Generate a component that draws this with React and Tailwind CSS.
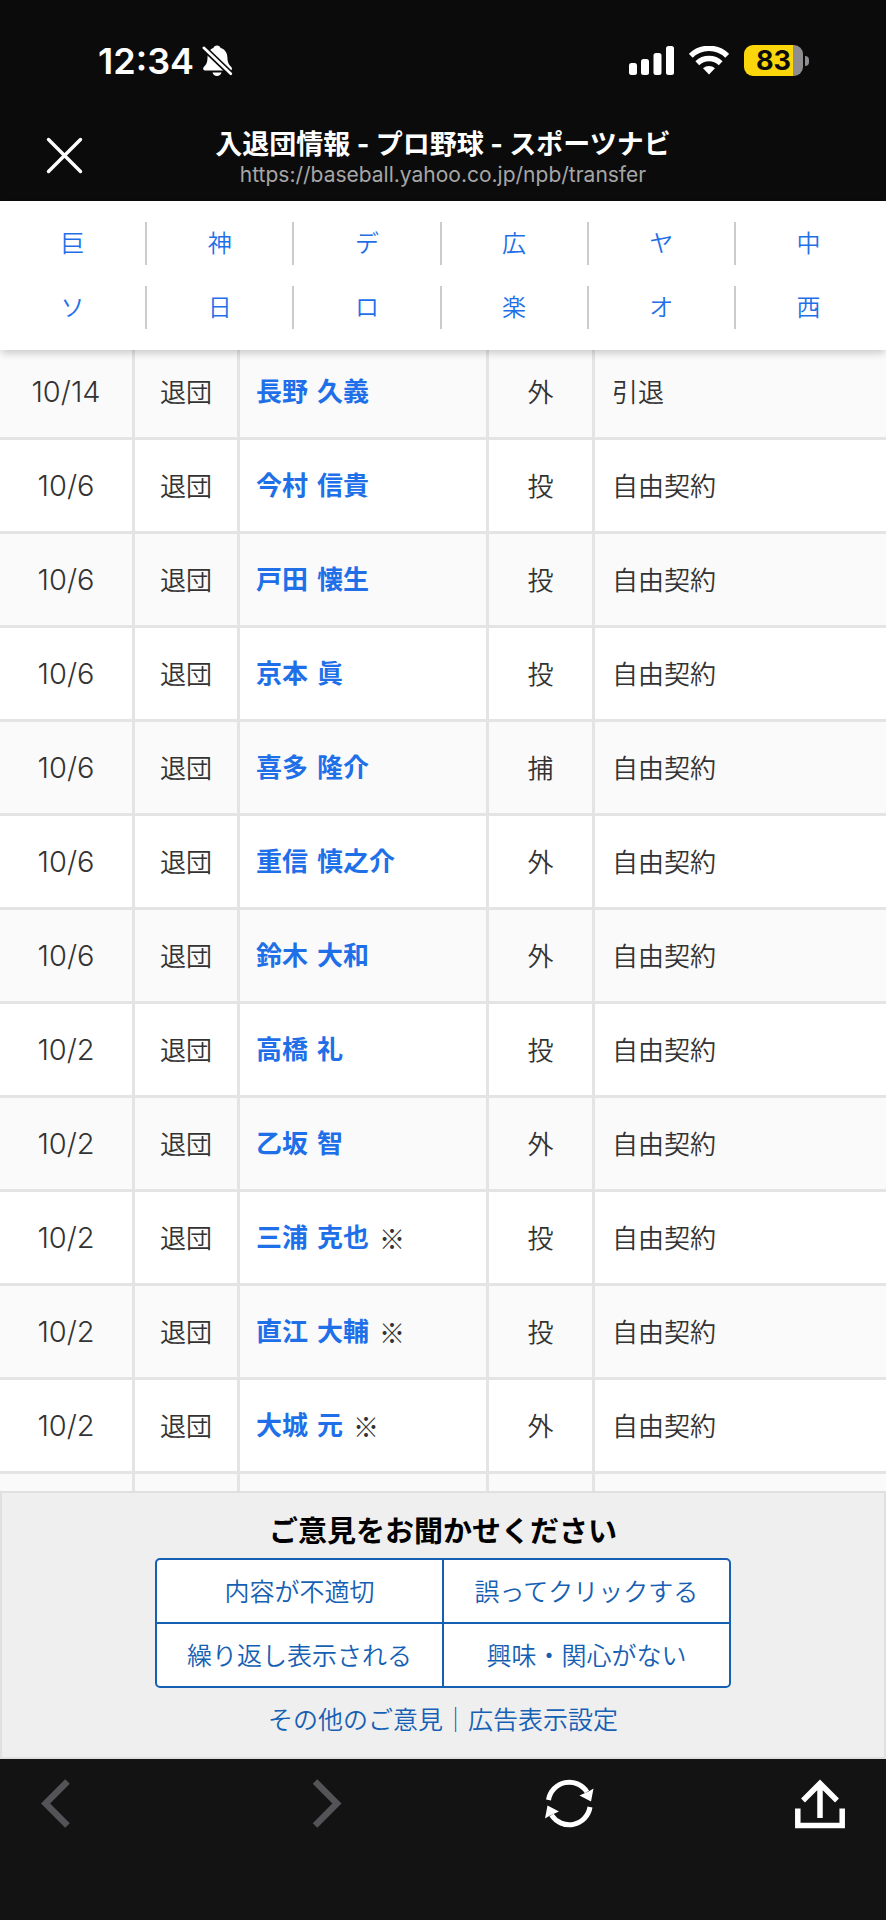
const teams = [
    ['巨', '神', 'デ', '広', 'ヤ', '中'],
    ['ソ', '日', 'ロ', '楽', 'オ', '西']
];

const transfers = [
    { date: '10/14', name: '長野 久義', position: '外', note: '引退' },
    { date: '10/6', name: '今村 信貴', position: '投', note: '自由契約' },
    { date: '10/6', name: '戸田 懐生', position: '投', note: '自由契約' },
    { date: '10/6', name: '京本 眞', position: '投', note: '自由契約' },
    { date: '10/6', name: '喜多 隆介', position: '捕', note: '自由契約' },
    { date: '10/6', name: '重信 慎之介', position: '外', note: '自由契約' },
    { date: '10/6', name: '鈴木 大和', position: '外', note: '自由契約' },
    { date: '10/2', name: '高橋 礼', position: '投', note: '自由契約' },
    { date: '10/2', name: '乙坂 智', position: '外', note: '自由契約' },
    { date: '10/2', name: '三浦 克也', position: '投', note: '自由契約', mark: true },
    { date: '10/2', name: '直江 大輔', position: '投', note: '自由契約', mark: true },
    { date: '10/2', name: '大城 元', position: '外', note: '自由契約', mark: true }
];

const StatusBar = () => (
    <div className="flex h-[121px] items-center justify-between pl-[98px] pr-[77px]">
        <div className="flex items-center gap-2">
            <span className="font-['Inter',sans-serif] text-[36px] leading-none font-semibold">12:34</span>
            <svg width="32" height="32" viewBox="0 0 32 32" aria-label="消音">
                <path
                    d="M15 0.5c1.8 0 3.2 1 3.6 2.6 4.3 1.3 6.6 4.6 6.8 9.4.2 5 1.200 6.800 3.600 9.200 1.600 1.600 1.200 3.800-1 3.800H3.500c-2.500 0-3-2.300-1.300-4 2.400-2.300 3.100-4.200 3.300-8.500C5.800 7.800 7.600 4.400 11.400 3.100 11.800 1.500 13.200.5 15 .5zM10.500 27.500h9c-.5 2-2.300 3.500-4.500 3.500s-4-1.500-4.500-3.500z"
                    fill="#fff"
                />
                <path d="M1.800 2.800l27 26" stroke="#0b0b0b" strokeWidth="6" />
                <path d="M1.800 2.800l27 26" stroke="#fff" strokeWidth="2.600" strokeLinecap="round" />
            </svg>
        </div>
        <div className="flex items-center gap-[15px]">
            <svg width="45" height="30" viewBox="0 0 45 30" fill="#fff" aria-label="電波">
                <rect x="0" y="17" width="8" height="12" rx="2.500" />
                <rect x="12" y="13" width="8" height="16" rx="2.500" />
                <rect x="24.500" y="7" width="8" height="22" rx="2.500" />
                <rect x="37" y="0" width="8" height="29" rx="2.500" />
            </svg>
            <svg width="40" height="30" viewBox="0 0 40 30" fill="none" stroke="#fff" strokeWidth="5.500" aria-label="Wi-Fi">
                <path d="M1.800 9.800a26 26 0 0 1 36.400 0" />
                <path d="M8.300 17.200a17 17 0 0 1 23.400 0" />
                <path d="M20 28.600l-6-6.300a9 9 0 0 1 12 0z" fill="#fff" stroke="none" />
            </svg>
            <div className="flex items-center gap-[2px]">
                <span className="flex h-[31px] w-[59px] items-center justify-center rounded-[9px] bg-[linear-gradient(90deg,#fbd60b_83%,#8e8e90_83%)] font-['Inter',sans-serif] text-[27px] leading-none font-bold text-[#0b0b0b]">
                    83
                </span>
                <span className="h-[10px] w-1 rounded-r-full bg-[#8e8e90]" />
            </div>
        </div>
    </div>
);

const BrowserHeader = () => (
    <header className="h-[201px] shrink-0 bg-[#0b0b0b] text-white">
        <StatusBar />
        <div className="grid grid-cols-[82px_1fr_82px] items-center">
            <button type="button" aria-label="閉じる" className="pl-[46px]">
                <svg width="37" height="37" viewBox="0 0 37 37" stroke="#fff" strokeWidth="3.400" strokeLinecap="round">
                    <path d="M2.500 2.500l32 32M34.500 2.500l-32 32" />
                </svg>
            </button>
            <div className="pt-2 text-center">
                <h1 className="font-['Inter','Noto_Sans_CJK_JP',sans-serif] text-[27px] leading-[32px] font-bold">
                    入退団情報 - プロ野球 - スポーツナビ
                </h1>
                <p className="font-['Inter',sans-serif] text-[21px] leading-[28px] text-[#a6a6a6]">
                    https://baseball.yahoo.co.jp/npb/transfer
                </p>
            </div>
        </div>
    </header>
);

const TeamNav = () => (
    <nav className="relative z-10 flex shrink-0 flex-col gap-[21px] bg-white py-[21px] pr-[3px] shadow-[0_4px_8px_-1px_rgba(0,0,0,0.2)]">
        {teams.map((row) => (
            <div key={row[0]} className="grid grid-cols-6">
                {row.map((team) => (
                    <a
                        key={team}
                        href="#"
                        className="flex h-[43px] items-center justify-center border-r-2 border-[#cccccc] pb-[3px] text-[24px] leading-none font-[350] text-[#1f70e8] last:border-transparent"
                    >
                        {team}
                    </a>
                ))}
            </div>
        ))}
    </nav>
);

const TransferTable = () => (
    <table className="-mt-1 w-full table-fixed border-separate border-spacing-0 text-[26px] leading-[36px] font-[350] text-[#333333] [&_td]:h-[94px] [&_td]:border-b-3 [&_td]:border-[#e4e4e4] [&_td:not(:last-child)]:border-r-3">
        <colgroup>
            <col className="w-[135px]" />
            <col className="w-[105px]" />
            <col className="w-[249px]" />
            <col className="w-[106px]" />
            <col />
        </colgroup>
        <tbody>
            {transfers.map((item) => (
                <tr key={item.name} className="odd:bg-[#fafafa]">
                    <td className="p-0 text-center font-['Inter',sans-serif] text-[29px] font-light">{item.date}</td>
                    <td className="p-0 pb-[2px] text-center">退団</td>
                    <td className="p-0">
                        <div className="flex items-center gap-[10px] pl-4">
                            <a href="#" className="font-['DejaVu_Sans','Noto_Sans_CJK_JP',sans-serif] font-bold text-[#1f70e8]">
                                {item.name}
                            </a>
                            {item.mark && <span>※</span>}
                        </div>
                    </td>
                    <td className="p-0 pb-[2px] text-center">{item.position}</td>
                    <td className="p-0 pb-[2px]">
                        <div className="pl-[17px]">{item.note}</div>
                    </td>
                </tr>
            ))}
            <tr className="odd:bg-[#fafafa]">
                <td /><td /><td /><td /><td />
            </tr>
        </tbody>
    </table>
);

const Feedback = () => (
    <section className="flex h-[268px] shrink-0 flex-col items-center border-2 border-[#e0e0e0] bg-[#efefef] pt-4 text-[25px] text-[#1660b4]">
        <h2 className="text-[29px] leading-[40px] font-bold text-black">ご意見をお聞かせください</h2>
        <div className="mt-[9px] grid w-[576px] max-w-full grid-cols-2 gap-[2px] overflow-hidden rounded-[5px] border-2 border-[#1660b4] bg-[#1660b4] [&>button]:h-[62px] [&>button]:bg-white [&>button]:font-[350]">
            <button type="button">内容が不適切</button>
            <button type="button">誤ってクリックする</button>
            <button type="button">繰り返し表示される</button>
            <button type="button">興味・関心がない</button>
        </div>
        <p className="mt-3 leading-[36px] font-[350]">
            <a href="#">その他のご意見</a>｜<a href="#">広告表示設定</a>
        </p>
    </section>
);

const Toolbar = () => (
    <footer className="grid h-[161px] shrink-0 grid-cols-[272fr_232fr_250fr_50fr] items-start bg-[#131313] px-[41px] pt-5">
        <button type="button" aria-label="戻る" className="justify-self-start">
            <svg width="30" height="50" viewBox="0 0 30 50" fill="none" stroke="#545358" strokeWidth="6.500">
                <path d="M26.500 2.500L4.600 24.500l21.900 22" />
            </svg>
        </button>
        <button type="button" aria-label="進む" className="justify-self-start">
            <svg width="30" height="50" viewBox="0 0 30 50" fill="none" stroke="#545358" strokeWidth="6.500">
                <path d="M2 2.500l21.900 22L2 46.500" />
            </svg>
        </button>
        <button type="button" aria-label="再読み込み" className="justify-self-start">
            <svg width="50" height="50" viewBox="0 0 50 50" fill="none" stroke="#fff" strokeWidth="5">
                <path d="M3.500 21A21 21 0 0 1 42 13" />
                <path d="M45 28A21 21 0 0 1 6.500 36" />
                <path d="M34.500 16.500L46 22.500 48.500 9.500 43.500 12.500zM14 32.500L2.500 26.500 0 39.500l5-3z" fill="#fff" stroke="none" />
            </svg>
        </button>
        <button type="button" aria-label="共有" className="justify-self-end">
            <svg width="50" height="50" viewBox="0 0 50 50" fill="none" stroke="#fff" strokeWidth="5.500">
                <path d="M2.800 29.500v17h44.400v-17M25 39V5M8 21.500l17-17 17 17" />
            </svg>
        </button>
    </footer>
);

const App = () => {
    return (
        <div className="flex h-screen flex-col bg-white font-['Noto_Sans_CJK_JP',sans-serif]">
            <BrowserHeader />
            <TeamNav />
            <main className="min-h-0 flex-1 overflow-hidden">
                <TransferTable />
            </main>
            <Feedback />
            <Toolbar />
        </div>
    );
};

export default App;
